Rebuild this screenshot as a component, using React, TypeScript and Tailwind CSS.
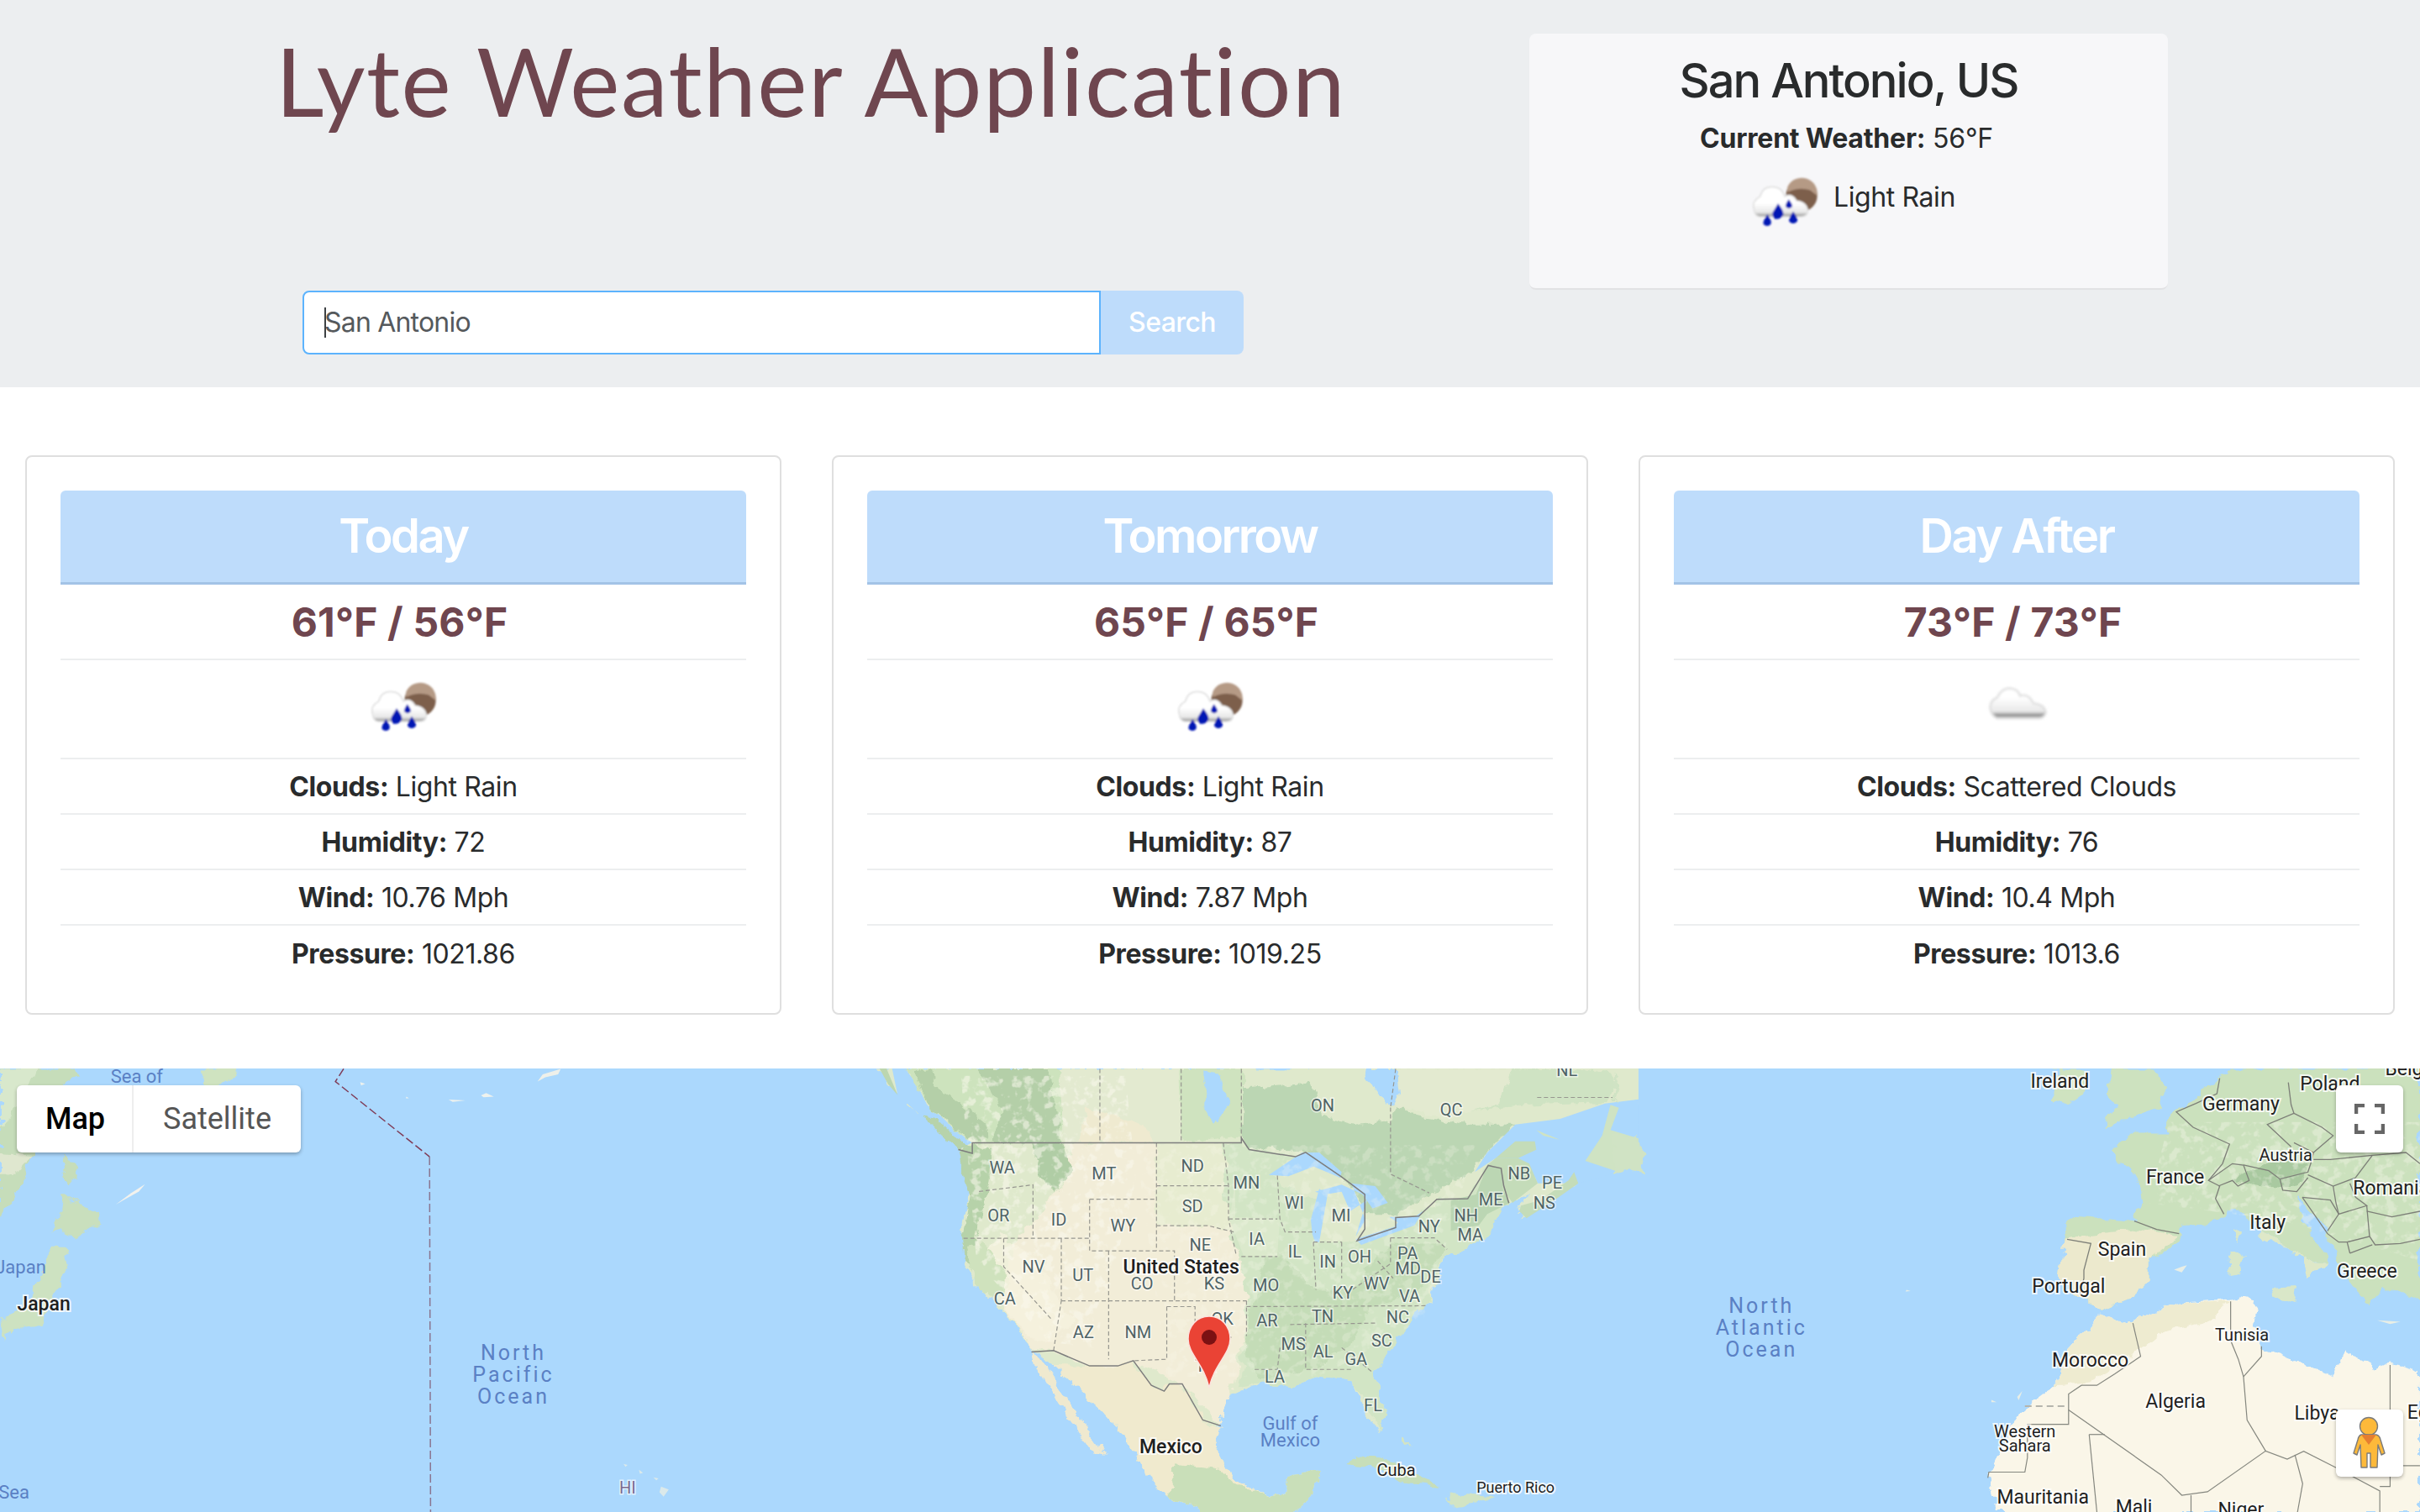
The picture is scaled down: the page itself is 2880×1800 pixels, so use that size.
const rainy = 'rain'
const cloudy = 'cloud'

const days = [
  { title: 'Today', temp: '61°F / 56°F', icon: rainy, clouds: 'Light Rain', humidity: '72', wind: '10.76 Mph', pressure: '1021.86' },
  { title: 'Tomorrow', temp: '65°F / 65°F', icon: rainy, clouds: 'Light Rain', humidity: '87', wind: '7.87 Mph', pressure: '1019.25' },
  { title: 'Day After', temp: '73°F / 73°F', icon: cloudy, clouds: 'Scattered Clouds', humidity: '76', wind: '10.4 Mph', pressure: '1013.6' },
]

function RainIcon() {
  return (
    <svg viewBox="0 0 360 300" className="w-[120px] h-[100px]">
      <defs>
        <filter id="soft"><feGaussianBlur stdDeviation="3.5" /></filter>
        <linearGradient id="rainCloud" x1="0" y1="0" x2="0" y2="1">
          <stop offset="0.55" stopColor="#ffffff" />
          <stop offset="0.85" stopColor="#e8e8e8" />
          <stop offset="1" stopColor="#8f8f8f" />
        </linearGradient>
      </defs>
      <g filter="url(#soft)">
        <circle cx="240" cy="132" r="56" fill="#7d5f4b" />
        <path d="M190 100 A56 56 0 0 1 296 132 L270 112 Q230 100 190 120Z" fill="#b59a85" />
        <path d="M70 180 Q62 150 92 135 Q100 100 135 100 Q170 100 180 135 Q205 120 222 150 Q262 155 262 190 Q260 205 240 207 L90 207 Q72 205 70 180Z" fill="url(#rainCloud)" stroke="#e2e2e2" strokeWidth="5" />
        <path d="M156 160 Q180 190 174 202 Q165 218 145 215 Q132 205 138 190Z" fill="#0318b4" />
        <path d="M194 145 Q210 165 206 172 Q195 183 184 172 Q180 165 194 145Z" fill="#0318b4" />
        <path d="M210 188 Q230 215 224 224 Q210 238 196 224 Q192 215 210 188Z" fill="#0318b4" />
        <path d="M118 198 Q136 225 130 234 Q118 246 104 234 Q100 225 118 198Z" fill="#0318b4" />
      </g>
    </svg>
  )
}

function CloudIcon() {
  return (
    <svg viewBox="0 0 360 300" className="w-[120px] h-[100px]">
      <defs>
        <filter id="softer"><feGaussianBlur stdDeviation="4" /></filter>
        <linearGradient id="plainCloud" x1="0" y1="0" x2="0" y2="1">
          <stop offset="0.3" stopColor="#ffffff" />
          <stop offset="0.78" stopColor="#e8e8e8" />
          <stop offset="0.9" stopColor="#8c8c8c" />
          <stop offset="1" stopColor="#bdbdbd" />
        </linearGradient>
      </defs>
      <path filter="url(#softer)" d="M85 155 Q88 130 110 122 Q125 88 155 88 Q185 90 192 115 Q222 105 240 142 Q280 145 284 175 Q280 192 262 195 L110 195 Q88 185 85 155Z" fill="url(#plainCloud)" stroke="#dddddd" strokeWidth="7" />
    </svg>
  )
}

function Row({ label, value }: { label: string; value: string }) {
  return (
    <li className="h-[66px] pt-[2px] flex items-center justify-center border-b-2 border-[#eceeef] last:border-b-0 text-[32px] tracking-[-0.4px] text-[#292b2c]">
      <p><span className="font-bold">{label}:</span> {value}</p>
    </li>
  )
}

function DayCard({ day }: { day: (typeof days)[number] }) {
  return (
    <div className="h-[666px] border-2 border-[#dfdfdf] rounded-lg p-10">
      <div className="h-[112px] pb-[2px] rounded-t-md bg-[#bedcfb] border-b-[3px] border-[#a3c3e6] flex items-center justify-center text-white text-[56px] font-semibold tracking-[-2.5px]">
        {day.title}
      </div>
      <div className="h-[90px] pt-[2px] pr-[9px] flex items-center justify-center border-b-2 border-[#eceeef] text-[48px] font-bold tracking-[0.2px] text-[#6f464f]">
        {day.temp}
      </div>
      <div className="h-[118px] pt-[4px] flex justify-center border-b-2 border-[#eceeef]">
        {day.icon === rainy ? <RainIcon /> : <CloudIcon />}
      </div>
      <ul>
        <Row label="Clouds" value={day.clouds} />
        <Row label="Humidity" value={day.humidity} />
        <Row label="Wind" value={day.wind} />
        <Row label="Pressure" value={day.pressure} />
      </ul>
    </div>
  )
}

// map shapes are in the same 1568x1568 grid per 960x540 tile
const tile = (i: number) => `translate(${i * 960} 1260) scale(0.6122 0.3444)`

const states = [
  'M570 36V292', 'M728 36V292', 'M845 36V275', 'M1135 170V400L1210 465', 'M1420 135H1568', 'M1145 36L1135 170',
  'M335 460L440 437V620', 'M305 622H550', 'M495 622V838', 'M383 622V720L475 900', 'M550 487V665H715V838', 'M550 487H680', 'M680 292V665',
  'M680 440H820', 'M680 578H780L830 600', 'M587 665V1040', 'M495 838H855', 'M810 292L820 440V555L835 680', 'M820 555H915', 'M845 685H915',
  'M855 838V960', 'M700 858H755V950L830 965', 'M700 858V1040L635 1045', 'M915 405L920 555L930 600H990', 'M985 635L990 800', 'M1040 635V760', 'M985 635H1040',
  'M855 858L1205 855', 'M940 920L1105 915', 'M970 915V1075H1060', 'M920 1000L915 1075H870', 'M1040 1000L1100 1085', 'M1135 620H1220L1245 660', 'M1135 620V710L1060 800',
  'M1110 700L1140 760', 'M480 1010L495 838',
]

const africaBorders = [
  'M1010 915L1025 1030L975 1090L940 1130H910L885 1160V1265H805V1380L800 1430H730L728 1450', 'M885 1215L1065 1440L1105 1510L1155 1498L1268 1357L1310 1385L1342 1358L1405 1415L1490 1495V1568',
  'M1200 840V975L1215 1040L1225 1100L1232 1250L1268 1357', 'M1260 995V1030L1225 1100', 'M1510 1060V1480H1490', 'M1510 1408H1568', 'M925 1300H955', 'M925 1300L940 1568', 'M1123 1510V1568', 'M1325 1370L1340 1470L1330 1568',
]

// drawn at 3x, from (2380, 1272)
const europeBorders = [
  'M785 35L775 90L700 125L630 155L690 210L820 270L795 340L745 400L785 420L770 465L800 520', 'M480 545L560 575L640 590', 'M240 610L325 625L300 720L300 750L285 810',
  'M1030 50L1040 130L1050 160L955 200L1040 280', 'M870 345L960 365L1000 395L1100 370L1110 340L1120 300L1050 265', 'M1050 160L1150 210L1190 240L1120 300',
  'M745 400L830 340L870 345L890 400L850 420L830 400L780 420', 'M1000 395L1010 435L1060 440L1100 390', 'M1120 325L1180 325L1330 310L1450 300L1500 340',
  'M1330 310L1270 390L1190 420L1100 380', 'M1190 420L1200 480L1210 520L1310 490L1270 460L1250 410', 'M1310 510L1400 530L1500 510', 'M1320 600L1340 630L1430 625L1500 610',
  'M1250 660L1330 630', 'M1080 460L1180 470L1210 520L1170 580', 'M1080 460L1170 590L1210 620L1240 620L1250 660', 'M1310 490L1320 600L1240 620',
]

const labels = [
  { t: 'Sea of', i: 0, x: 266, y: 62, k: 'sea' },
  { t: 'Japan', i: 0, x: 40, y: 722, k: 'sea' },
  { t: 'Japan', i: 0, x: 85, y: 848, k: 'big' },
  { t: 'North', i: 0, x: 998, y: 1018, k: 'ocean' },
  { t: 'Pacific', i: 0, x: 998, y: 1093, k: 'ocean' },
  { t: 'Ocean', i: 0, x: 998, y: 1170, k: 'ocean' },
  { t: 'Sea', i: 0, x: 27, y: 1500, k: 'sea' },
  { t: 'HI', i: 0, x: 1220, y: 1485, k: 'hi' },
  { t: 'NL', i: 1, x: 1478, y: 40, k: 'state' },
  { t: 'ON', i: 1, x: 1003, y: 163, k: 'state' },
  { t: 'QC', i: 1, x: 1253, y: 176, k: 'state' },
  { t: 'WA', i: 1, x: 380, y: 378, k: 'state' },
  { t: 'MT', i: 1, x: 578, y: 398, k: 'state' },
  { t: 'ND', i: 1, x: 750, y: 372, k: 'state' },
  { t: 'MN', i: 1, x: 855, y: 430, k: 'state' },
  { t: 'NB', i: 1, x: 1385, y: 398, k: 'state' },
  { t: 'PE', i: 1, x: 1449, y: 430, k: 'state' },
  { t: 'NS', i: 1, x: 1434, y: 500, k: 'state' },
  { t: 'ME', i: 1, x: 1330, y: 488, k: 'state' },
  { t: 'SD', i: 1, x: 750, y: 511, k: 'state' },
  { t: 'WI', i: 1, x: 948, y: 500, k: 'state' },
  { t: 'MI', i: 1, x: 1039, y: 543, k: 'state' },
  { t: 'NH', i: 1, x: 1282, y: 544, k: 'state' },
  { t: 'OR', i: 1, x: 373, y: 544, k: 'state' },
  { t: 'ID', i: 1, x: 490, y: 558, k: 'state' },
  { t: 'WY', i: 1, x: 615, y: 578, k: 'state' },
  { t: 'NY', i: 1, x: 1210, y: 580, k: 'state' },
  { t: 'MA', i: 1, x: 1290, y: 610, k: 'state' },
  { t: 'IA', i: 1, x: 875, y: 625, k: 'state' },
  { t: 'NE', i: 1, x: 765, y: 645, k: 'state' },
  { t: 'IL', i: 1, x: 949, y: 668, k: 'state' },
  { t: 'PA', i: 1, x: 1168, y: 673, k: 'state' },
  { t: 'OH', i: 1, x: 1075, y: 686, k: 'state' },
  { t: 'IN', i: 1, x: 1013, y: 702, k: 'state' },
  { t: 'NV', i: 1, x: 441, y: 720, k: 'state' },
  { t: 'MD', i: 1, x: 1169, y: 727, k: 'state' },
  { t: 'UT', i: 1, x: 537, y: 750, k: 'state' },
  { t: 'DE', i: 1, x: 1213, y: 755, k: 'state' },
  { t: 'WV', i: 1, x: 1108, y: 779, k: 'state' },
  { t: 'CO', i: 1, x: 652, y: 779, k: 'state' },
  { t: 'KS', i: 1, x: 792, y: 779, k: 'state' },
  { t: 'MO', i: 1, x: 893, y: 784, k: 'state' },
  { t: 'KY', i: 1, x: 1042, y: 810, k: 'state' },
  { t: 'VA', i: 1, x: 1172, y: 822, k: 'state' },
  { t: 'CA', i: 1, x: 385, y: 830, k: 'state' },
  { t: 'TN', i: 1, x: 1003, y: 892, k: 'state' },
  { t: 'NC', i: 1, x: 1149, y: 895, k: 'state' },
  { t: 'OK', i: 1, x: 808, y: 900, k: 'state' },
  { t: 'AR', i: 1, x: 895, y: 907, k: 'state' },
  { t: 'AZ', i: 1, x: 538, y: 947, k: 'state' },
  { t: 'NM', i: 1, x: 644, y: 947, k: 'state' },
  { t: 'SC', i: 1, x: 1118, y: 976, k: 'state' },
  { t: 'MS', i: 1, x: 946, y: 988, k: 'state' },
  { t: 'AL', i: 1, x: 1004, y: 1012, k: 'state' },
  { t: 'GA', i: 1, x: 1068, y: 1040, k: 'state' },
  { t: 'TX', i: 1, x: 775, y: 1062, k: 'state' },
  { t: 'LA', i: 1, x: 910, y: 1100, k: 'state' },
  { t: 'FL', i: 1, x: 1101, y: 1200, k: 'state' },
  { t: 'United States', i: 1, x: 728, y: 721, k: 'big' },
  { t: 'Mexico', i: 1, x: 708, y: 1342, k: 'big' },
  { t: 'Gulf of', i: 1, x: 940, y: 1263, k: 'sea' },
  { t: 'Mexico', i: 1, x: 940, y: 1320, k: 'sea' },
  { t: 'Cuba', i: 1, x: 1146, y: 1424, k: 'small' },
  { t: 'Puerto Rico', i: 1, x: 1378, y: 1482, k: 'tiny' },
  { t: 'Ireland', i: 2, x: 868, y: 80, k: 'mid' },
  { t: 'Poland', i: 2, x: 1393, y: 88, k: 'mid' },
  { t: 'Germany', i: 2, x: 1220, y: 158, k: 'mid' },
  { t: 'Belg', i: 2, x: 1537, y: 36, k: 'mid' },
  { t: 'Austria', i: 2, x: 1307, y: 335, k: 'small' },
  { t: 'France', i: 2, x: 1092, y: 410, k: 'mid' },
  { t: 'Romania', i: 2, x: 1512, y: 448, k: 'mid' },
  { t: 'Italy', i: 2, x: 1272, y: 568, k: 'mid' },
  { t: 'Spain', i: 2, x: 989, y: 660, k: 'mid' },
  { t: 'Portugal', i: 2, x: 885, y: 787, k: 'mid' },
  { t: 'Greece', i: 2, x: 1465, y: 736, k: 'mid' },
  { t: 'Tunisia', i: 2, x: 1222, y: 955, k: 'small' },
  { t: 'Morocco', i: 2, x: 927, y: 1044, k: 'mid' },
  { t: 'Algeria', i: 2, x: 1093, y: 1186, k: 'mid' },
  { t: 'Libya', i: 2, x: 1368, y: 1228, k: 'mid' },
  { t: 'Egypt', i: 2, x: 1590, y: 1225, k: 'mid' },
  { t: 'Western', i: 2, x: 800, y: 1290, k: 'small' },
  { t: 'Sahara', i: 2, x: 800, y: 1340, k: 'small' },
  { t: 'Mauritania', i: 2, x: 835, y: 1517, k: 'mid' },
  { t: 'Mali', i: 2, x: 1012, y: 1553, k: 'mid' },
  { t: 'Niger', i: 2, x: 1220, y: 1560, k: 'mid' },
  { t: 'North', i: 2, x: 288, y: 855, k: 'ocean' },
  { t: 'Atlantic', i: 2, x: 288, y: 930, k: 'ocean' },
  { t: 'Ocean', i: 2, x: 288, y: 1005, k: 'ocean' },
]

const labelStyle: Record<string, string> = {
  sea: 'text-[22px] fill-[#5a80c4]',
  ocean: 'text-[25px] tracking-[3px] fill-[#5a80c4]',
  big: 'text-[23px] font-medium fill-[#1f1f1f] stroke-[#ffffffcc] stroke-[4px] [paint-order:stroke]',
  mid: 'text-[23px] fill-[#1f1f1f] stroke-[#ffffffcc] stroke-[4px] [paint-order:stroke]',
  small: 'text-[20px] fill-[#1f1f1f] stroke-[#ffffffcc] stroke-[4px] [paint-order:stroke]',
  tiny: 'text-[18px] fill-[#1f1f1f] stroke-[#ffffffcc] stroke-[4px] [paint-order:stroke]',
  state: 'text-[20px] fill-[#4f6366] stroke-[#ffffff99] stroke-[3px] [paint-order:stroke]',
  hi: 'text-[20px] fill-[#7a6a90] stroke-[#ffffffaa] stroke-[3px] [paint-order:stroke]',
}

function WorldMap() {
  const line = { fill: 'none', vectorEffect: 'non-scaling-stroke' as const }
  return (
    <svg viewBox="0 1272 2880 528" className="block w-full h-[528px] font-[Roboto,sans-serif]">
      <defs>
        {/* wiggle the polygon edges so the coasts and zones read as terrain */}
        <filter id="terrain" x="-5%" y="-5%" width="110%" height="110%" colorInterpolationFilters="sRGB">
          <feTurbulence type="fractalNoise" baseFrequency="0.035 0.02" numOctaves="4" seed="4" />
          <feDisplacementMap in="SourceGraphic" scale="32" xChannelSelector="R" yChannelSelector="G" />
        </filter>
        <filter id="blotch" x="0" y="0" width="100%" height="100%">
          <feTurbulence type="fractalNoise" baseFrequency="0.05 0.03" numOctaves="3" seed="9" result="n" />
          <feColorMatrix in="n" type="matrix" values="0 0 0 0 0.96  0 0 0 0 0.95  0 0 0 0 0.86  6 0 0 0 -3.1" result="spots" />
          <feComposite in="spots" in2="SourceAlpha" operator="in" />
        </filter>
      </defs>
      <rect x="0" y="1272" width="2880" height="528" fill="#abd8fd" />

      {/* Asia and the Pacific */}
      <g transform={tile(0)}>
        <g filter="url(#terrain)">
          <path d="M0 36H145L150 60L120 90L135 130L60 340L30 480L0 555Z" fill="#c6ddba" />
          <path d="M0 36H70L50 130L0 240Z" fill="#d8e8cc" />
          <path d="M0 330L60 340L30 400L0 400Z" fill="#dfe7cf" />
          <path d="M390 36H465L455 70L420 95L395 90Z" fill="#cfe3c0" />
          <path d="M130 330L155 410L130 435L125 380Z" fill="#c6ddba" />
          <path d="M125 465L150 510L190 535L190 575L150 622L120 590L95 600L115 560Z" fill="#c9dfbd" />
          <path d="M100 650L122 650L130 730L110 800L80 920L30 930L10 975L0 900L60 830L90 720Z" fill="#cde2c1" />
        </g>
        <path d="M225 505L255 465L282 435L270 460L240 490Z" fill="#f2f2ee" />
        <path d="M1045 80L1055 55L1090 36L1085 55L1060 65Z" fill="#eef0ea" />
        <path d="M1285 1480L1300 1490L1290 1515L1282 1500Z M1212 1402L1220 1405L1216 1412Z M1242 1422L1250 1432L1244 1436Z M1270 1448L1280 1452L1276 1458Z" fill="#dbe9ea" />
        <path d="M700 82L710 88L702 94Z M790 132L795 138L789 138Z M872 142L905 145L880 150Z M935 128L945 120L960 132L940 134Z M818 160L825 172Z" fill="#eef2ee" />
        <path d="M668 36L652 80L835 340" {...line} stroke="#7f3a55" strokeWidth="1.5" strokeDasharray="10 4" />
        <path d="M835 340L837 1568" {...line} stroke="#8a7590" strokeWidth="1.5" strokeDasharray="10 4" />
      </g>

      {/* Americas */}
      <g transform={tile(1)}>
        <g filter="url(#terrain)">
          <path d="M140 36H1568V180L1500 215L1430 240L1400 285L1320 345L1350 345L1420 400L1500 400L1480 450L1390 550L1385 510L1410 470L1340 520L1300 570L1310 630L1240 690L1230 770L1200 860L1150 960L1100 1090L1125 1230L1115 1295L1085 1230L1070 1120L1000 1100L940 1140L880 1120L820 1170L800 1260L795 1340L830 1460L900 1510L930 1500L940 1440L1000 1425L990 1500L950 1568H810L770 1568L700 1510L660 1440L610 1290L575 1220L480 1060L440 1000L420 960L385 880L340 800L305 700L300 610L310 500L325 440L295 315L260 240L230 200L175 125Z" fill="#dfe9cc" />
          <path d="M440 1000L480 1100L530 1240L580 1370L560 1362L490 1200L450 1080Z" fill="#efe9cf" />
          <path d="M510 292H845L840 430L820 555L840 680L855 840L850 960L830 1130L800 1260L730 1125L635 1045L605 1063L550 1063L480 1010L440 1000L380 860L400 640L500 440Z" fill="#f2edd8" />
          <path d="M680 292H815L825 440H680Z M680 440H820L830 600L780 578H680Z" fill="#e7ecd0" />
          <path d="M810 292H845L860 315L950 340L900 400L990 500L985 635L1070 630L1135 590L1145 585L1190 545L1225 487L1285 485L1325 370L1355 380L1365 500L1310 630L1240 690L1200 860L1100 1090L1125 1230L1115 1295L1070 1120L1000 1100L940 1140L880 1120L840 1130L855 960L855 840L840 680L820 555Z" fill="#d2e5c5" />
          <path d="M900 640L990 800L1060 800L1130 640L1240 640L1200 790L1100 860L1050 1000L980 1070L880 1110L850 980L870 830Z" fill="#c4dcb7" />
          <path d="M380 600L440 700L520 900L470 980L430 960L370 830L330 760L340 680Z" fill="#f6f1df" opacity="0.75" />
          <path d="M635 1045L670 1130L695 1150L705 1125L730 1125L770 1250L805 1270L795 1340L830 1460L900 1510L930 1500L950 1568H770L700 1510L660 1440L610 1290L575 1220L480 1060L550 1063L605 1063Z" fill="#f0eace" />
          <path d="M720 1400L800 1420L830 1470L900 1510L930 1500L940 1440L1000 1425L990 1500L950 1568H770L700 1510Z" fill="#c9dfb9" />
          <path d="M1045 1405L1080 1370L1150 1400L1230 1480L1170 1470L1100 1415Z" fill="#c7deb9" />
          <path d="M1250 1500L1340 1520L1300 1540L1260 1550Z M1165 1300L1172 1345L1160 1320Z M1240 1530L1275 1535L1255 1550Z" fill="#d2e4c4" />
        </g>
      </g>

      {/* Pacific coast and Rockies, drawn at 3x from (1000, 1272) */}
      <g transform="translate(1000 1272) scale(0.3333)">
        <path d="M185 0H232L275 60L310 130L360 170L405 215L470 265L420 292L380 260L300 180L205 95Z" fill="#abd8fd" />
        <g filter="url(#terrain)">
          <path d="M232 0H800L790 265H470L405 215L310 130L275 60Z" fill="#cde3bd" />
          <path d="M300 170L340 175L460 285L420 290L360 240Z" fill="#b7d3ab" />
          <path d="M270 10L330 0L340 70L440 130L520 200L530 250L470 260L410 215L310 130Z" fill="#b4cfa8" />
          <path d="M490 0H740L780 190L790 265H540L580 150Z" fill="#b4cfa8" />
          <path d="M780 0H1210L1220 265H800Z" fill="#e3ead0" />
          <path d="M880 140L1080 200L1120 265H850Z" fill="#efead0" />
          <path d="M1210 0H1440V240L1220 265Z" fill="#cfe3bf" />
          <path d="M425 295L480 270L540 290L530 400L520 470L490 560L470 700L440 690L435 600L465 450L445 400Z" fill="#b6d2a9" />
          <path d="M685 265H790L830 360L770 440L710 380Z" fill="#b0cda5" />
          <path d="M450 640L520 620L580 720L590 800L530 820L480 770Z" fill="#cfe2bd" />
          <path d="M1300 10L1350 20L1390 130L1330 200L1300 150Z" fill="#abd8fd" />
        </g>
        <path d="M140 0L165 0L205 95L170 55Z" fill="#bcd6b0" />
      </g>

      {/* Great Lakes and eastern Canada, drawn at 3x from (1450, 1272) */}
      <g transform="translate(1450 1272) scale(0.3333)">
        <path d="M350 0H1500V130L1440 130L1400 140L1310 320L1140 240L1130 290L1050 300L990 320L920 370L800 430L640 520L530 520L310 300L85 280V60L250 40Z" fill="#dfe9cc" />
        <g filter="url(#terrain)">
          <path d="M85 240L90 70L250 60L330 50L370 170L500 200L610 190L640 130L700 170L900 200L1060 200L960 300L900 370L800 430L720 470L640 520L530 520L480 420L310 300L100 280Z" fill="#bbd6b3" />
          <path d="M350 0H1050L1100 60L1000 130L900 150L820 180L620 130L520 0Z" fill="#e3ead0" />
          <path d="M900 150L1130 130L1380 120L1430 60L1390 10L1050 0L1000 130Z" fill="#cfe3c3" />
          <path d="M530 0H635L645 90L610 145L560 70L525 40Z" fill="#abd8fd" />
        </g>
        <path d="M1060 200L1220 180L1380 125L1500 110V330L1430 370L1285 410L1140 410L1110 340L1070 320L990 320L915 370L960 300Z" fill="#abd8fd" />
        <path d="M1400 130L1430 140L1400 220L1500 250V320L1430 370L1310 330L1370 240Z" fill="#cfe3c3" />
        <path d="M990 320L1060 260L1130 260L1135 290L1070 320Z" fill="#c4dcb9" />
        <path d="M1135 220L1220 255L1160 240Z" fill="#cfe3c3" />
        <path d="M920 450L960 345L1015 360L1015 430L1040 480L960 520L930 560L830 580L830 470Z" fill="#bbd6b3" />
        <path d="M960 345L990 320L1070 320L1110 340L1140 410L1050 480L1015 430L1015 360Z" fill="#c4dcb9" />
        <path d="M1080 490L1150 470L1250 400L1270 370L1285 410L1200 470L1100 535L1075 510Z" fill="#c4dcb9" />
        <path d="M60 400V530L220 540L210 670L90 670L40 540Z" fill="#dbe9cc" />
        <path d="M180 380L300 300L360 300L440 370L435 390L340 350L250 385Z M335 590L330 540L360 430L390 450L360 620L345 620Z M345 440L440 415L515 450L550 500L605 480L560 420L475 410L525 540L490 600L530 470L470 510L440 440L380 450Z M490 610L630 565L640 550L610 530L700 530L730 510L700 560L510 630Z" fill="#abd8fd" />
      </g>

      <g transform={tile(1)}>
        {/* pale terrain specks over the Rockies and the plains */}
        <path filter="url(#blotch)" opacity="0.55" d="M300 60H620L640 420L560 1000L470 980L330 700Z" />
        <path filter="url(#blotch)" opacity="0.25" d="M640 300H1300L1200 900L1000 1100L700 1100Z" />
        {states.map((d) => (
          <path key={d} d={d} {...line} stroke="#979790" strokeWidth="1.2" strokeDasharray="5 3" />
        ))}
        <path d="M295 315L322 328V292H845V275L860 315L950 340L970 325L1040 410L1085 470V590L1070 630L1145 585V550L1190 545L1225 487L1285 485L1325 370L1350 380L1355 440L1365 500" {...line} stroke="#7d7d7d" strokeWidth="1.5" />
        <path d="M437 1015L480 1010L550 1063H605L635 1045L670 1130L695 1150L705 1125L730 1125L770 1250L805 1270" {...line} stroke="#7d7d7d" strokeWidth="1.5" />
      </g>

      {/* Atlantic, Europe and Africa */}
      <g transform={tile(2)}>
        <g filter="url(#terrain)">
          <path d="M0 50L10 100L0 160Z M0 260L45 270L65 400L30 380L0 400Z" fill="#d0e3c4" />
          <path d="M860 36H920L925 100L880 160L855 150L860 100Z" fill="#cfe3c0" />
          <path d="M965 36H1050L1075 100L1060 170L950 235L975 170L960 100Z" fill="#cde2bf" />
          <path d="M1205 36H1568V840L1500 790L1470 850L1440 800L1410 700L1390 590L1340 500L1320 470L1340 560L1385 680L1385 710L1330 680L1260 590L1210 520L1165 570L1100 575L1105 630L1040 700L1040 770L1010 820L945 870L930 860L870 760L880 640L875 570L900 545L1015 565L1030 500L1020 400L960 320L1015 260H1075V200L1110 170L1150 100Z" fill="#cbe1bd" />
          <path d="M880 620L1015 590L1100 610L1040 700L1040 770L1010 820L945 870L930 860L870 760Z" fill="#ece9cd" />
          <path d="M1280 350L1350 360L1340 420L1300 450L1200 420Z" fill="#a9c9a0" />
          <path d="M1260 590L1330 680L1385 710L1350 760L1340 680L1260 620Z" fill="#dee8c8" />
          <path d="M1205 590L1222 600L1210 640Z M1198 670L1225 680L1215 750L1200 755Z M1280 795L1330 790L1325 845L1290 820Z" fill="#d9e7c8" />
          <path d="M1568 1080L1510 1050L1480 1070L1420 1005L1400 1100L1330 1050L1260 1000L1240 920L1250 840L1220 825L1100 845L1040 880L1000 915L945 885L880 1010L860 1130L800 1210L760 1320L730 1440L745 1568H1568Z" fill="#faf6e8" />
          <path d="M945 885L1000 915L1040 880L1100 845L1200 835L1170 900L1060 950L1000 1040L920 1120L860 1130L880 1010Z" fill="#eeebd0" />
        </g>
        <path filter="url(#blotch)" opacity="0.35" d="M1080 220H1568V700L1300 560L1040 500Z" />
        <path d="M1105 720L1090 730L1105 740L1115 715Z M1485 905L1530 910L1510 918Z M570 800L578 804L568 806Z M735 1180L745 1188L735 1188Z M785 1170L795 1150L788 1182Z" fill="#e8eee6" />
        {africaBorders.map((d) => (
          <path key={d} d={d} {...line} stroke="#85877f" strokeWidth="1.2" />
        ))}
        <path d="M800 1202H885" {...line} stroke="#b5b5ad" strokeWidth="2" strokeDasharray="8 5" />
      </g>
      <g transform="translate(2380 1272) scale(0.3333)">
        {europeBorders.map((d) => (
          <path key={d} d={d} {...line} stroke="#7d7f78" strokeWidth="1.3" />
        ))}
      </g>

      {labels.map((l) => (
        <text
          key={`${l.t}-${l.i}-${l.x}`}
          x={l.i * 960 + l.x * 0.6122}
          y={1260 + l.y * 0.3444}
          textAnchor="middle"
          dominantBaseline="central"
          className={labelStyle[l.k]}
        >
          {l.t}
        </text>
      ))}

      {/* marker */}
      <path
        d="M1439 1567 C1424 1567 1414 1579 1414 1594 C1414 1612 1433 1624 1439 1652 C1445 1624 1464 1612 1464 1594 C1464 1579 1454 1567 1439 1567Z"
        fill="#ea4335"
        stroke="#fbe4df"
        strokeWidth="1.5"
      />
      <ellipse cx="1439" cy="1592" rx="9" ry="9" fill="#7b1113" />
    </svg>
  )
}

export default function App() {
  return (
    <div className="w-[2880px] h-[1800px] overflow-hidden bg-white font-[Inter,sans-serif] text-[#292b2c]">
      <header className="h-[461px] bg-[#eceef0] flex pt-10">
        <div className="w-[1820px]">
          <h1 className="pl-[328px] h-[306px] -mt-[3px] mb-[3px] text-[112px] leading-[118px] tracking-[1.6px] font-[Lato,sans-serif] font-normal text-[#6f464f] whitespace-nowrap">
            Lyte Weather Application
          </h1>
          <div className="ml-[360px] w-[1120px] h-[76px] flex">
            <div className="relative flex-1">
              <input
                defaultValue="San Antonio"
                className="w-full h-full pl-[24px] pb-[2px] bg-white border-2 border-[#5cb3fd] rounded-l-lg outline-none text-[32px] tracking-[-0.8px] text-[#55595c]"
              />
              <span className="absolute left-[26px] top-[20px] h-9 w-[2px] bg-[#3d4144]" />
            </div>
            <button className="w-[170px] h-full pb-[1px] bg-[#bedcfb] rounded-r-lg text-white text-[32px] tracking-[-0.6px] font-medium">Search</button>
          </div>
        </div>
        <div className="w-[760px] h-[305px] pt-[20px] bg-[#f7f7f9] rounded-lg border-b-2 border-[#e2e2e4] text-center">
          <h3 className="text-[56px] leading-[72px] font-medium tracking-[-2px]">San Antonio, US</h3>
          <p className="mt-[9px] pr-[5px] text-[32px] leading-[48px] tracking-[-0.2px]">
            <span className="font-bold">Current Weather:</span> 56°F
          </p>
          <div className="ml-[244px] flex items-start">
            <RainIcon />
            <span className="text-[32px] leading-[48px] mt-[22px] -ml-[2px] tracking-[-0.4px]">Light Rain</span>
          </div>
        </div>
      </header>

      <section className="h-[811px] px-[30px] pt-[81px] grid grid-cols-3 gap-[60px] items-start">
        {days.map((d) => (
          <DayCard key={d.title} day={d} />
        ))}
      </section>

      <div className="relative h-[528px] overflow-hidden">
        <WorldMap />
        <div className="absolute left-5 top-5 h-20 flex bg-white rounded-md shadow-[0_2px_4px_rgba(0,0,0,0.3)] font-[Roboto,sans-serif] text-[36px]">
          <div className="w-[139px] pl-[2px] flex items-center justify-center font-medium text-black border-r-2 border-[#eeeeee]">Map</div>
          <div className="w-[199px] flex items-center justify-center text-[#565656]">Satellite</div>
        </div>
        <div className="absolute left-[2780px] top-5 w-20 h-20 bg-white rounded-md shadow-[0_2px_4px_rgba(0,0,0,0.3)] flex items-center justify-center">
          <svg viewBox="0 0 36 36" className="w-9 h-9" fill="none" stroke="#666666" strokeWidth="4.5">
            <path d="M2 12V2H12M24 2H34V12M34 24V34H24M12 34H2V24" />
          </svg>
        </div>
        <div className="absolute left-[2780px] top-[406px] w-20 h-20 bg-white rounded-md shadow-[0_2px_4px_rgba(0,0,0,0.3)] flex items-center justify-center">
          <svg viewBox="0 0 80 80" className="w-20 h-20" stroke="#7b7b7b" strokeWidth="1.4" strokeLinejoin="round">
            <circle cx="39" cy="20" r="10.5" fill="#fdb93a" />
            <path d="M30 30H48Q52 31 53 36L58 52L54 54L50 42L49 69H41V52H37V69H30L29 42L25 54L21 52L26 36Q27 31 30 30Z" fill="#fdb93a" />
            <path d="M30 30H48L39 42Z" fill="#e57e31" stroke="none" />
          </svg>
        </div>
      </div>
    </div>
  )
}
